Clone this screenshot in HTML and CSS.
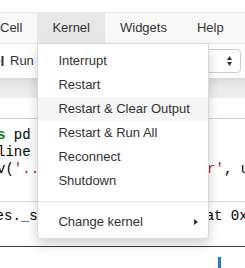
FILE: index.html
```html
<!DOCTYPE html>
<html lang="en">
<head>
<meta charset="utf-8">
<title>Notebook</title>
<link rel="stylesheet" href="styles.css">
</head>
<body>
<div class="page">
  <div class="topgap"></div>
  <div class="menubar">
    <ul class="nav">
      <li class="nav-item">Cell</li>
      <li class="nav-item open">Kernel
        <ul class="dropdown">
          <li class="dd-item">Interrupt</li>
          <li class="dd-item">Restart</li>
          <li class="dd-item active">Restart &amp; Clear Output</li>
          <li class="dd-item">Restart &amp; Run All</li>
          <li class="dd-item">Reconnect</li>
          <li class="dd-item">Shutdown</li>
          <li class="divider"></li>
          <li class="dd-item submenu">Change kernel<span class="caret-right"></span></li>
        </ul>
      </li>
      <li class="nav-item">Widgets</li>
      <li class="nav-item">Help</li>
    </ul>
  </div>
  <div class="toolbar">
    <div class="run-btn">
      <svg class="run-icon" width="12" height="10" viewBox="0 0 12 10"><polygon points="0,0 9,5 0,10" fill="#333"/><rect x="9.5" y="0" width="2" height="10" fill="#333"/></svg>
      <span>Run</span>
    </div>
    <div class="cell-type">
      <span class="cell-type-label">Code</span>
      <svg class="updown" width="5" height="10" viewBox="0 0 5 10"><polygon points="2.5,0 5,4 0,4" fill="#333"/><polygon points="0,6 5,6 2.5,10" fill="#333"/></svg>
    </div>
  </div>
  <div class="site-gap"></div>
  <div class="notebook">
    <div class="input-area">
<pre class="code"><span class="kw">import</span> pandas <span class="kw">as</span> pd
%matplotlib  inline
df <span class="op">=</span> pd.read_csv(<span class="str">'../data/survey_2016.tar'</span>, usecols<span class="op">=</span>[0, 1])
</pre>
    </div>
    <div class="output-area">
<pre class="out">&lt;matplotlib.axes._subplots.AxesSubplot at 0x10c5d6a90&gt;</pre>
    </div>
    <div class="next-cell">
      <div class="cursor-bar"></div>
    </div>
  </div>
</div>
</body>
</html>
```

FILE: styles.css
```css
html, body {
  margin: 0;
  padding: 0;
  width: 245px;
  height: 268px;
  overflow: hidden;
  background: #fff;
}

.page {
  font-family: "Liberation Sans", Arial, sans-serif;
  font-size: 13px;
  color: #333;
}

.topgap {
  height: 12px;
  background: #fff;
}

.menubar {
  background: #f8f8f8;
  border-top: 1px solid #e7e7e7;
  border-bottom: 1px solid #e7e7e7;
  position: relative;
  z-index: 5;
}

.nav {
  list-style: none;
  margin: 0 0 0 -15px;
  padding: 0;
  display: flex;
  white-space: nowrap;
}

.nav-item {
  padding: 6px 15px;
  line-height: 18px;
  color: #333;
  position: relative;
}

.nav-item.open {
  background: #e7e7e7;
}

.dropdown {
  position: absolute;
  top: 100%;
  left: 0;
  width: 172px;
  box-sizing: border-box;
  margin: 0;
  padding: 5px 0 4px;
  list-style: none;
  background: #fff;
  border: 1px solid rgba(0, 0, 0, 0.15);
  border-radius: 0 0 4px 4px;
  box-shadow: 0 6px 12px rgba(0, 0, 0, 0.175);
  z-index: 10;
}

.dd-item {
  padding: 3px 20px;
  line-height: 18px;
  color: #333;
  position: relative;
}

.dd-item.active {
  background: #f5f5f5;
}

.divider {
  height: 1px;
  margin: 8px 0;
  background: #e5e5e5;
}

.caret-right {
  position: absolute;
  right: 10px;
  top: 50%;
  margin-top: -3px;
  width: 0;
  height: 0;
  border-style: solid;
  border-width: 3.5px 0 3.5px 4px;
  border-color: transparent transparent transparent #333;
}

.toolbar {
  height: 24px;
  padding: 5px 0;
  background: #fff;
  display: flex;
  align-items: center;
  justify-content: space-between;
}

.run-btn {
  display: flex;
  align-items: center;
  gap: 6px;
  margin-left: -8px;
  line-height: 18px;
  color: #333;
}

.run-icon {
  display: block;
}

.cell-type {
  width: 100px;
  height: 24px;
  box-sizing: border-box;
  border: 1px solid #ccc;
  border-radius: 4px;
  margin-right: 4px;
  display: flex;
  align-items: center;
  justify-content: space-between;
  padding: 0 8px 0 8px;
  background: #fff;
}

.updown {
  display: block;
}

.site-gap {
  height: 20px;
  background: linear-gradient(to bottom, #d8d8d8 0, #e4e4e4 5px, #ececec 12px, #eeeeee 20px);
}

.notebook {
  background: #fff;
  padding-top: 20px;
}

.input-area {
  border-top: 1px solid #cfcfcf;
  border-bottom: 1px solid #dcdcdc;
  padding: 8px 0 6px;
  height: 68px;
}

.code, .out {
  margin: 0;
  font-family: "Liberation Mono", "Courier New", monospace;
  font-size: 14px;
  line-height: 17px;
  color: #000;
  white-space: pre;
}

.code {
  margin-left: -129px;
}

.kw {
  color: #008000;
  font-weight: bold;
}

.op {
  color: #aa22ff;
}

.str {
  color: #ba2121;
}

.output-area {
  padding-top: 6px;
  height: 38px;
}

.out {
  margin-left: -122px;
}

.next-cell {
  border-top: 1px solid #3a3a3a;
  padding-top: 10px;
}

.cursor-bar {
  margin-left: 218px;
  width: 3px;
  height: 14px;
  background: #2f74d0;
}
```
